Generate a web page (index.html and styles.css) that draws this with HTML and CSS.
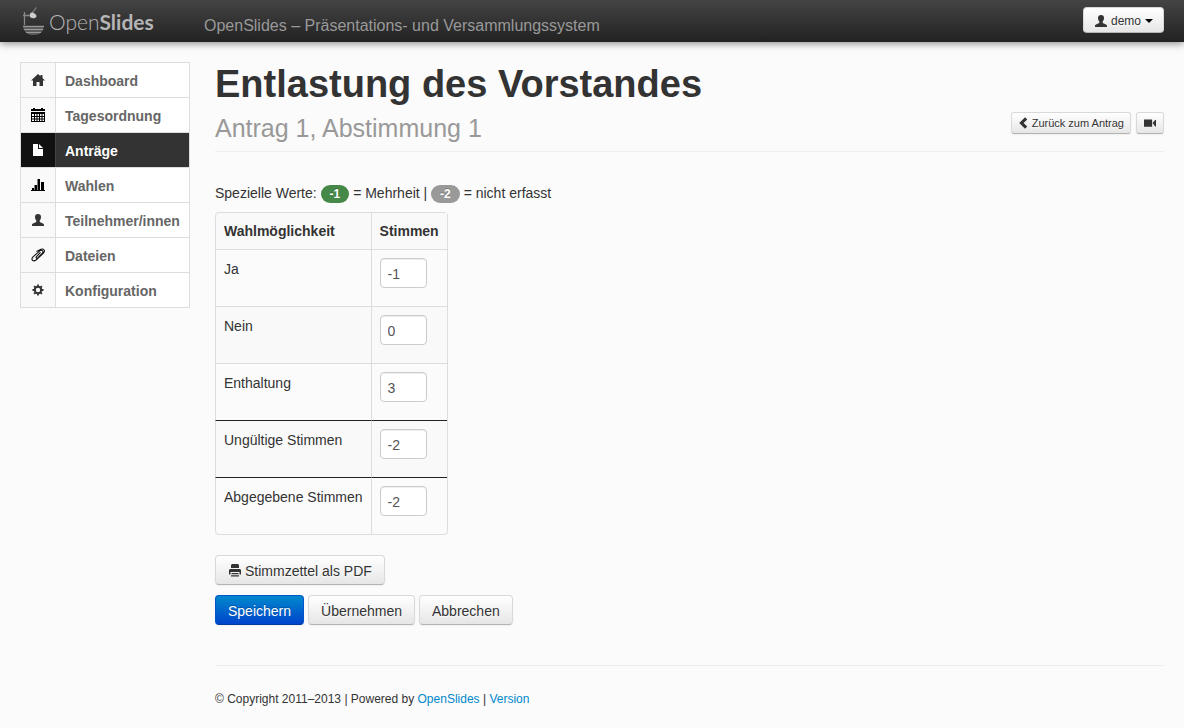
FILE: index.html
```html
<!DOCTYPE html>
<html lang="de">
<head>
<meta charset="utf-8">
<meta name="viewport" content="width=device-width, initial-scale=1">
<title>Entlastung des Vorstandes – OpenSlides</title>
<link rel="stylesheet" href="styles.css">
</head>
<body>
<svg class="sprite" aria-hidden="true">
  <symbol id="user" viewBox="0 0 14 14"><path d="M7 1C5 1 4 2.300 4 4c0 1.400.5 2.700 1.300 3.400v1.400C4.700 9.700 1 10.200 1 12v1h12v-1c0-1.800-3.700-2.300-4.300-3.200V7.400C9.500 6.700 10 5.400 10 4c0-1.700-1-3-3-3z"/></symbol>
</svg>
<header class="topbar">
  <a class="brand" href="#" aria-label="OpenSlides">
    <svg class="brand-mark" width="24" height="32" viewBox="0 0 24 32">
      <path d="M2.500 7v13M1 10.500h8" stroke="#888" stroke-width="1.300" fill="none"/>
      <path d="M10 8L14.500 2.500" stroke="#777" stroke-width="1.200"/>
      <path d="M8 8.500L9.500 7.500c2.500 0 5 2 5 4-1 2-4 2.500-6.500.5z" fill="#ccc"/>
      <path d="M1 20.500h21c0 3-1 5-3 7-2 1.800-4 2.500-7.500 2.500S6 29.500 4 27.500c-2-2-3-4-3-7z" fill="#5c5c5c"/>
      <path d="M1 21.500h21M2 24.500h19M4 27.500h15" stroke="#999" stroke-width="1"/>
    </svg>
    <span class="brand-name">Open<b>Slides</b></span>
  </a>
  <span class="tagline">OpenSlides – Präsentations- und Versammlungssystem</span>
  <button class="btn btn-user" type="button"><svg class="icon" viewBox="0 0 14 14"><use href="#user"/></svg>demo<span class="caret"></span></button>
</header>
<div class="layout">
  <nav class="sidebar">
    <a href="#"><span class="nav-icon"><svg class="icon" viewBox="0 0 14 14"><path d="M7 1L0 7.500h2V13h3.500V9h3v4H12V7.500h2L11.500 5V2h-2v1.200z"/></svg></span><span class="nav-text">Dashboard</span></a>
    <a href="#"><span class="nav-icon"><svg class="icon icon-dark" viewBox="0 0 14 14"><path fill-rule="evenodd" d="M2 0h2v1h6V0h2v1h2v2H0V1h2zM0 4h14v10H0zM1 6v2h2V6zm3 0v2h1.500V6zm2.500 0v2H8V6zM9 6v2h1.500V6zm2.500 0v2H13V6zM1 9v1.500h2V9zm3 0v1.500h1.500V9zm2.500 0v1.500H8V9zM9 9v1.500h1.500V9zm2.500 0v1.500H13V9zM1 11.500V13h2v-1.500zm3 0V13h1.500v-1.500zm2.500 0V13H8v-1.500zm2.500 0V13h1.500v-1.500zm2.500 0V13H13v-1.500z"/></svg></span><span class="nav-text">Tagesordnung</span></a>
    <a class="active" href="#" aria-current="page"><span class="nav-icon"><svg class="icon" viewBox="0 0 14 14"><path d="M2 1h5v5h5v7H2zM8 1l4 4H8z"/></svg></span><span class="nav-text">Anträge</span></a>
    <a href="#"><span class="nav-icon"><svg class="icon icon-dark" viewBox="0 0 14 14"><path d="M0 12h14v1H0zM1 10h2v2H1zM3.500 7H6v5H3.500zM6.500 1H9v11H6.500zM10 4h3v8h-3z"/></svg></span><span class="nav-text">Wahlen</span></a>
    <a href="#"><span class="nav-icon"><svg class="icon" viewBox="0 0 14 14"><use href="#user"/></svg></span><span class="nav-text">Teilnehmer/innen</span></a>
    <a href="#"><span class="nav-icon"><svg class="icon" viewBox="0 0 14 14"><path d="M9.500 4.300L5.500 8.700c-1 1.200.3 2.200 1.300 1.200l4.600-4.800c1.500-2-.6-3.700-2.600-2.200L2 8.800c-2.500 2.800.3 5.400 3 3.200l7.400-6.800c2.300-2.500.3-4.800-2.400-4L5.500 3.500" fill="none" stroke="#111" stroke-width="1.100"/></svg></span><span class="nav-text">Dateien</span></a>
    <a href="#"><span class="nav-icon"><svg class="icon" viewBox="0 0 14 14"><circle cx="7" cy="7" r="3.200" fill="none" stroke="#333" stroke-width="2"/><path d="M7 1.500v2M7 10.500v2M1.500 7h2M10.500 7h2M3.100 3.100l1.400 1.400M9.500 9.500l1.400 1.400M3.100 10.900l1.400-1.400M9.500 4.500l1.400-1.400" stroke="#333" stroke-width="1.800"/></svg></span><span class="nav-text">Konfiguration</span></a>
  </nav>
  <main class="content">
    <div class="page-header">
      <h1>Entlastung des Vorstandes<small>Antrag 1, Abstimmung 1</small></h1>
      <div class="actions">
        <a class="btn btn-mini" href="#"><svg class="icon icon-mini" viewBox="0 0 14 14"><path d="M9.500 1.500L4 7l5.500 5.500" fill="none" stroke="#333" stroke-width="3.600"/></svg>Zurück zum Antrag</a>
        <a class="btn btn-mini" href="#" aria-label="Projektor"><svg class="icon icon-mini" viewBox="0 0 14 14"><path d="M0 3h9.500v8.500H0zM10 7l3-3.500h1v7.500h-1z"/></svg></a>
      </div>
    </div>
    <form>
      <p class="legend">Spezielle Werte: <span class="badge badge-success">-1</span> = Mehrheit | <span class="badge">-2</span> = nicht erfasst</p>
      <table class="votes">
        <thead><tr><th scope="col">Wahlmöglichkeit</th><th scope="col">Stimmen</th></tr></thead>
        <tbody>
          <tr><td><label for="yes">Ja</label></td><td><input id="yes" type="text" value="-1"></td></tr>
          <tr><td><label for="no">Nein</label></td><td><input id="no" type="text" value="0"></td></tr>
          <tr><td><label for="abstain">Enthaltung</label></td><td><input id="abstain" type="text" value="3"></td></tr>
          <tr class="total"><td><label for="invalid">Ungültige Stimmen</label></td><td><input id="invalid" type="text" value="-2"></td></tr>
          <tr class="total"><td><label for="cast">Abgegebene Stimmen</label></td><td><input id="cast" type="text" value="-2"></td></tr>
        </tbody>
      </table>
      <div class="button-row">
        <a class="btn" href="#"><svg class="icon" viewBox="0 0 14 14"><path d="M4 0h6l1 1v3H3V1zM2 5h10l1 1v4.500h-1.500V8h-9v2.500H1V6zM3.500 9h7v1.200h-7zM3 11.200h8v1.300H3z"/></svg>Stimmzettel als PDF</a>
      </div>
      <div class="button-row">
        <button class="btn btn-primary" type="submit">Speichern</button>
        <button class="btn" type="button">Übernehmen</button>
        <a class="btn" href="#">Abbrechen</a>
      </div>
    </form>
    <footer>© Copyright 2011–2013 | Powered by <a href="#">OpenSlides</a> | <a href="#">Version</a></footer>
  </main>
</div>
</body>
</html>
```
FILE: styles.css
```css
* { box-sizing: border-box; }

body {
  margin: 0;
  background: #fbfbfb;
  color: #333;
  font: 14px/20px "Liberation Sans", Arial, sans-serif;
}

.sprite { display: none; }
a { color: #08c; text-decoration: none; }

.icon {
  width: 14px;
  height: 14px;
  flex: none;
  fill: #333;
}
.icon-dark { fill: #000; }
.icon-mini { width: 12px; height: 12px; }

.topbar {
  display: flex;
  align-items: center;
  height: 42px;
  padding: 0 20px;
  background: linear-gradient(#444, #222);
  box-shadow: 0 1px 8px rgba(0, 0, 0, .5);
}
.brand {
  display: flex;
  align-items: center;
  width: 184px;
  color: #b5b5b5;
}
.brand-mark { margin-left: 2px; }
.brand-name {
  margin-left: 3px;
  padding-top: 2px;
  font: 300 21px/32px Lato, sans-serif;
}
.brand-name b { font-weight: 700; }
.tagline {
  padding-top: 10px;
  color: #999;
  font-size: 16px;
  line-height: 20px;
}

.btn {
  display: inline-flex;
  align-items: center;
  justify-content: center;
  height: 30px;
  padding: 2px 12px 0;
  gap: 3px;
  border: 1px solid #ccc;
  border-color: #d9d9d9 #d9d9d9 #b3b3b3;
  border-radius: 4px;
  background: linear-gradient(#fff, #e6e6e6);
  box-shadow: 0 1px 2px rgba(0, 0, 0, .05);
  color: #333;
  font: inherit;
  text-shadow: 0 1px 1px rgba(255, 255, 255, .75);
  white-space: nowrap;
}
.btn-primary {
  border-color: #0055cc #0055cc #003a9c;
  background: linear-gradient(#0088cc, #0044cc);
  color: #fff;
  text-shadow: 0 -1px 0 rgba(0, 0, 0, .25);
}
.btn-mini {
  height: 22px;
  min-width: 28px;
  padding: 0 6px;
  gap: 2px;
  border-radius: 3px;
  font-size: 11px;
}
.btn-user {
  height: 26px;
  margin-left: auto;
  margin-bottom: 2px;
  padding: 1px 10px 0;
  font-size: 12px;
}
.caret {
  margin-left: 1px;
  border: 4px solid transparent;
  border-top-color: #000;
  border-bottom: 0;
}

.layout {
  display: flex;
  gap: 25px;
  padding: 20px 20px 0;
}
.sidebar {
  flex: none;
  align-self: flex-start;
  width: 170px;
  border: 1px solid #ddd;
  border-top: 0;
}
.sidebar a {
  display: flex;
  height: 35px;
  border-top: 1px solid #ddd;
  background: #fff;
  color: #666;
  font-weight: 700;
  line-height: 36px;
}
.nav-icon {
  display: flex;
  align-items: center;
  justify-content: center;
  width: 35px;
  border-right: 1px solid #ddd;
  background: #f9f9f9;
}
.nav-text { padding-left: 9px; }
.sidebar .active { background: #333; color: #fff; }
.active .nav-icon { border-color: #444; background: #111; }
.active .icon { fill: #fff; }

.content { flex: 1; min-width: 0; }
.page-header {
  display: flex;
  align-items: flex-end;
  justify-content: space-between;
  padding-bottom: 1px;
  border-bottom: 1px solid #eee;
}
h1 {
  margin: 0;
  font-size: 38px;
  line-height: 44px;
}
h1 small {
  display: block;
  color: #999;
  font-size: 25px;
  font-weight: 400;
}
.actions {
  display: flex;
  gap: 5px;
  padding-bottom: 16px;
}

.legend { margin: 31px 0 9px; }
.badge {
  display: inline-block;
  padding: 2px 9px;
  border-radius: 9px;
  background: #999;
  color: #fff;
  font-size: 12px;
  font-weight: 700;
  line-height: 14px;
  text-shadow: 0 -1px 0 rgba(0, 0, 0, .25);
}
.badge-success { background: #468847; }

.votes {
  border: 1px solid #ddd;
  border-left: 0;
  border-radius: 4px;
  border-collapse: separate;
  border-spacing: 0;
}
.votes th,
.votes td {
  padding: 8px;
  border-left: 1px solid #ddd;
  text-align: left;
  vertical-align: top;
}
.votes th { background: #f9f9f9; }
.votes th:first-child { border-top-left-radius: 4px; }
.votes tr:last-child td:first-child { border-bottom-left-radius: 4px; }
.votes td { border-top: 1px solid #ddd; }
.votes label { display: block; padding-top: 1px; }
.votes tbody tr:nth-child(even) td { background: #f9f9f9; }
.votes .total td { border-top-color: #222; }
.votes input {
  display: block;
  width: 47px;
  height: 30px;
  margin-bottom: 10px;
  padding: 6px 7px 4px;
  border: 1px solid #ccc;
  border-radius: 4px;
  background: #fff;
  box-shadow: inset 0 1px 1px rgba(0, 0, 0, .075);
  color: #555;
  font: inherit;
}

.button-row {
  display: flex;
  gap: 4px;
  margin-top: 10px;
}
.votes + .button-row { margin-top: 20px; }

footer {
  margin-top: 40px;
  padding: 23px 0 18px;
  border-top: 1px solid #eee;
  font-size: 12px;
}
```
